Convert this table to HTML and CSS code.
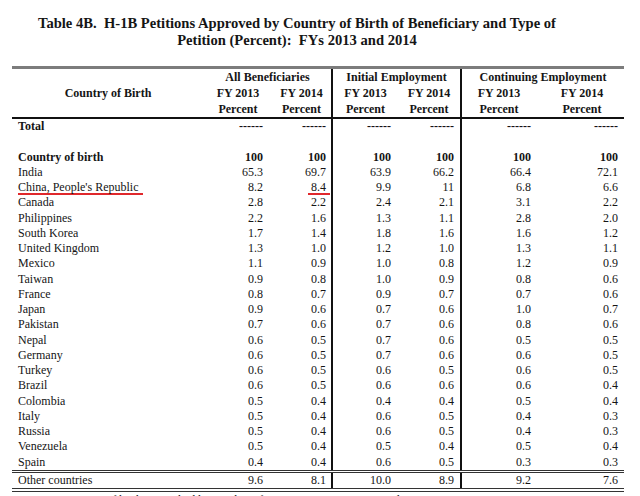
FILE: index.html
```html
<!DOCTYPE html>
<html lang="en">
<head>
<meta charset="utf-8">
<title>Table 4B. H-1B Petitions Approved by Country of Birth</title>
<link rel="stylesheet" href="styles.css">
</head>
<body>
<h1 class="title">Table 4B.&nbsp; H-1B Petitions Approved by Country of Birth of Beneficiary and Type of<br>Petition (Percent):&nbsp; FYs 2013 and 2014</h1>
<table class="data">
<colgroup>
<col class="c-country"><col class="c-a13"><col class="c-a14"><col class="c-i13"><col class="c-i14"><col class="c-c13"><col class="c-c14">
</colgroup>
<thead>
<tr class="r1">
<th rowspan="3" class="country-h">Country of Birth</th>
<th colspan="2">All Beneficiaries</th>
<th colspan="2" class="g">Initial Employment</th>
<th colspan="2" class="g">Continuing Employment</th>
</tr>
<tr class="r2">
<th>FY 2013</th><th>FY 2014</th><th class="g">FY 2013</th><th>FY 2014</th><th class="g">FY 2013</th><th class="cc14">FY 2014</th>
</tr>
<tr class="r3">
<th>Percent</th><th>Percent</th><th class="g">Percent</th><th>Percent</th><th class="g">Percent</th><th class="cc14">Percent</th>
</tr>
</thead>
<tbody>
<tr class="total"><td class="name">Total</td><td class="n a13">------</td><td class="n a14">------</td><td class="n i13 g">------</td><td class="n i14">------</td><td class="n c13 g">------</td><td class="n c14">------</td></tr>
<tr class="blank"><td></td><td></td><td></td><td class="g"></td><td></td><td class="g"></td><td></td></tr>
<tr class="bold"><td class="name">Country of birth</td><td class="n a13">100</td><td class="n a14">100</td><td class="n i13 g">100</td><td class="n i14">100</td><td class="n c13 g">100</td><td class="n c14">100</td></tr>
<tr><td class="name">India</td><td class="n a13">65.3</td><td class="n a14">69.7</td><td class="n i13 g">63.9</td><td class="n i14">66.2</td><td class="n c13 g">66.4</td><td class="n c14">72.1</td></tr>
<tr><td class="name"><span class="mark">China, People's Republic</span></td><td class="n a13">8.2</td><td class="n a14"><span class="mark mark-num">8.4</span></td><td class="n i13 g">9.9</td><td class="n i14">11</td><td class="n c13 g">6.8</td><td class="n c14">6.6</td></tr>
<tr><td class="name">Canada</td><td class="n a13">2.8</td><td class="n a14">2.2</td><td class="n i13 g">2.4</td><td class="n i14">2.1</td><td class="n c13 g">3.1</td><td class="n c14">2.2</td></tr>
<tr><td class="name">Philippines</td><td class="n a13">2.2</td><td class="n a14">1.6</td><td class="n i13 g">1.3</td><td class="n i14">1.1</td><td class="n c13 g">2.8</td><td class="n c14">2.0</td></tr>
<tr><td class="name">South Korea</td><td class="n a13">1.7</td><td class="n a14">1.4</td><td class="n i13 g">1.8</td><td class="n i14">1.6</td><td class="n c13 g">1.6</td><td class="n c14">1.2</td></tr>
<tr><td class="name">United Kingdom</td><td class="n a13">1.3</td><td class="n a14">1.0</td><td class="n i13 g">1.2</td><td class="n i14">1.0</td><td class="n c13 g">1.3</td><td class="n c14">1.1</td></tr>
<tr><td class="name">Mexico</td><td class="n a13">1.1</td><td class="n a14">0.9</td><td class="n i13 g">1.0</td><td class="n i14">0.8</td><td class="n c13 g">1.2</td><td class="n c14">0.9</td></tr>
<tr><td class="name">Taiwan</td><td class="n a13">0.9</td><td class="n a14">0.8</td><td class="n i13 g">1.0</td><td class="n i14">0.9</td><td class="n c13 g">0.8</td><td class="n c14">0.6</td></tr>
<tr><td class="name">France</td><td class="n a13">0.8</td><td class="n a14">0.7</td><td class="n i13 g">0.9</td><td class="n i14">0.7</td><td class="n c13 g">0.7</td><td class="n c14">0.6</td></tr>
<tr><td class="name">Japan</td><td class="n a13">0.9</td><td class="n a14">0.6</td><td class="n i13 g">0.7</td><td class="n i14">0.6</td><td class="n c13 g">1.0</td><td class="n c14">0.7</td></tr>
<tr><td class="name">Pakistan</td><td class="n a13">0.7</td><td class="n a14">0.6</td><td class="n i13 g">0.7</td><td class="n i14">0.6</td><td class="n c13 g">0.8</td><td class="n c14">0.6</td></tr>
<tr><td class="name">Nepal</td><td class="n a13">0.6</td><td class="n a14">0.5</td><td class="n i13 g">0.7</td><td class="n i14">0.6</td><td class="n c13 g">0.5</td><td class="n c14">0.5</td></tr>
<tr><td class="name">Germany</td><td class="n a13">0.6</td><td class="n a14">0.5</td><td class="n i13 g">0.7</td><td class="n i14">0.6</td><td class="n c13 g">0.6</td><td class="n c14">0.5</td></tr>
<tr><td class="name">Turkey</td><td class="n a13">0.6</td><td class="n a14">0.5</td><td class="n i13 g">0.6</td><td class="n i14">0.5</td><td class="n c13 g">0.6</td><td class="n c14">0.5</td></tr>
<tr><td class="name">Brazil</td><td class="n a13">0.6</td><td class="n a14">0.5</td><td class="n i13 g">0.6</td><td class="n i14">0.6</td><td class="n c13 g">0.6</td><td class="n c14">0.4</td></tr>
<tr><td class="name">Colombia</td><td class="n a13">0.5</td><td class="n a14">0.4</td><td class="n i13 g">0.4</td><td class="n i14">0.4</td><td class="n c13 g">0.5</td><td class="n c14">0.4</td></tr>
<tr><td class="name">Italy</td><td class="n a13">0.5</td><td class="n a14">0.4</td><td class="n i13 g">0.6</td><td class="n i14">0.5</td><td class="n c13 g">0.4</td><td class="n c14">0.3</td></tr>
<tr><td class="name">Russia</td><td class="n a13">0.5</td><td class="n a14">0.4</td><td class="n i13 g">0.6</td><td class="n i14">0.5</td><td class="n c13 g">0.4</td><td class="n c14">0.3</td></tr>
<tr><td class="name">Venezuela</td><td class="n a13">0.5</td><td class="n a14">0.4</td><td class="n i13 g">0.5</td><td class="n i14">0.4</td><td class="n c13 g">0.5</td><td class="n c14">0.4</td></tr>
<tr><td class="name">Spain</td><td class="n a13">0.4</td><td class="n a14">0.4</td><td class="n i13 g">0.6</td><td class="n i14">0.5</td><td class="n c13 g">0.3</td><td class="n c14">0.3</td></tr>
<tr class="other"><td class="name">Other countries</td><td class="n a13">9.6</td><td class="n a14">8.1</td><td class="n i13 g">10.0</td><td class="n i14">8.9</td><td class="n c13 g">9.2</td><td class="n c14">7.6</td></tr>
</tbody>
</table>
<p class="note">Note:&nbsp; Countries of birth are ranked by number of FY 2014 petitions approved.</p>
</body>
</html>
```
FILE: styles.css
```css
body {
  margin: 0;
  background: #ffffff;
  color: #151515;
  font-family: "Liberation Serif", "Times New Roman", serif;
}

.title {
  width: 594px;
  margin: 0;
  padding-top: 15px;
  text-align: center;
  font-weight: bold;
  font-size: 14.6px;
  line-height: 16.5px;
}

.data {
  margin: 18px 0 0 12px;
  width: 612px;
  table-layout: fixed;
  border-collapse: collapse;
  font-size: 12px;
}

.c-country { width: 192px; }
.c-a13 { width: 68px; }
.c-a14 { width: 60px; }
.c-i13 { width: 66px; }
.c-i14 { width: 63px; }
.c-c13 { width: 75px; }
.c-c14 { width: 88px; }

.data th,
.data td {
  padding: 0;
  white-space: nowrap;
  vertical-align: middle;
}

.data th {
  font-weight: bold;
  text-align: center;
  height: 16px;
  line-height: 16px;
}

.data th.cc14 { padding-left: 4px; }

.r1 th { border-top: 3px solid #7c7c7c; }
.r3 th { border-bottom: 2px solid #111; }
.country-h { border-bottom: 2px solid #111; }

.data td {
  height: 15.25px;
  line-height: 15.25px;
}

.data .g { border-left: 2px solid #111; }

.name {
  text-align: left;
  padding-left: 6px !important;
}

.n { text-align: right; }
.a13 { padding-right: 9px !important; }
.a14 { padding-right: 5px !important; }
.i13 { padding-right: 7px !important; }
.i14 { padding-right: 6px !important; }
.c13 { padding-right: 5px !important; }
.c14 { padding-right: 6px !important; }

.total td,
.bold td { font-weight: bold; }

.other td {
  height: 15px;
  line-height: 15px;
  border-top: 3px double #333;
  border-bottom: 4px double #333;
}

.mark {
  display: inline-block;
  line-height: 12px;
  padding-right: 5px;
  border-bottom: 2px solid #e0282c;
}

.mark-num {
  padding-left: 3px;
  padding-right: 4px;
  margin-right: -4px;
}

.note {
  margin: 1px 0 0 24px;
  font-size: 12px;
  line-height: 14px;
}
```
